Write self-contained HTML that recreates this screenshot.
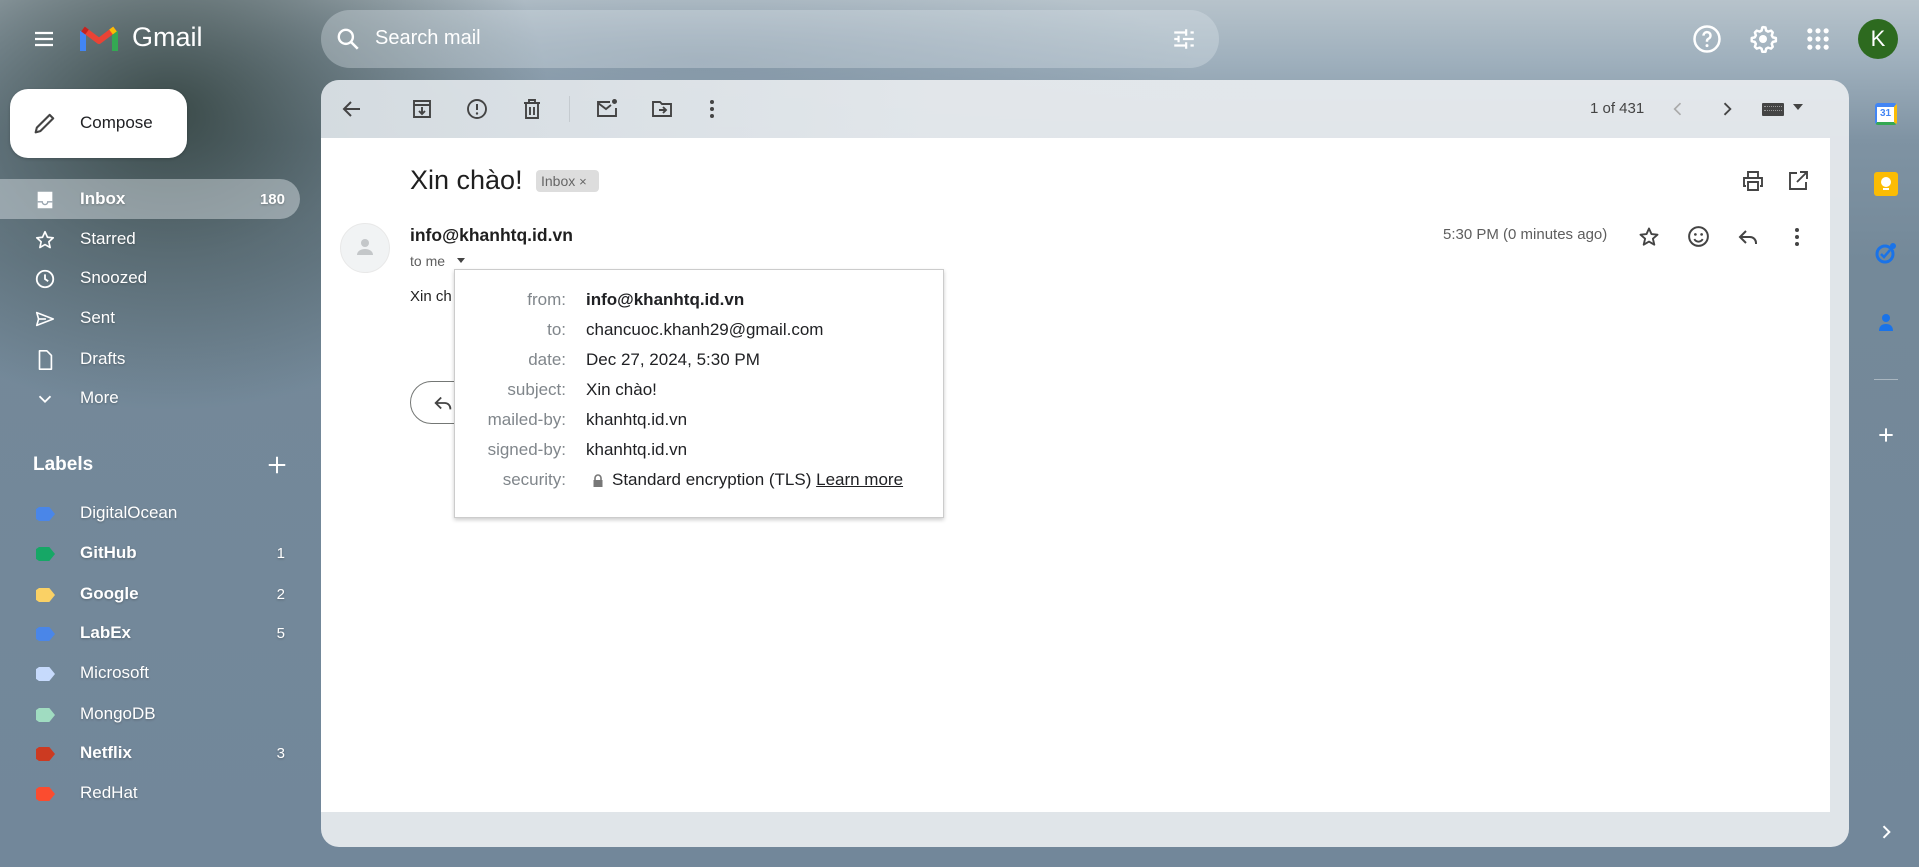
<!DOCTYPE html>
<html><head><meta charset="utf-8"><style>
*{box-sizing:border-box;margin:0;padding:0}
body{width:1919px;height:867px;overflow:hidden;font-family:"Liberation Sans",Arial,sans-serif;position:relative;
background:#72879a;}
.bg{position:absolute;inset:0;
background:
radial-gradient(ellipse 380px 300px at 170px 110px,rgba(45,60,56,.85) 0%,rgba(70,86,88,.55) 50%,rgba(110,130,145,0) 100%),
radial-gradient(ellipse 500px 90px at 700px 60px,rgba(110,130,148,.5) 0%,rgba(110,130,148,0) 100%),
linear-gradient(180deg,#b7c3cb 0px,#9fb0bd 60px,#7f93a3 140px,#748999 260px,#72879a 867px);}
.abs{position:absolute}
svg{display:block}
.nav{position:absolute;left:0;width:300px;height:40px;display:flex;align-items:center;color:#fff;font-size:17px;text-shadow:0 1px 2px rgba(0,0,0,.25)}
.nav .ic{position:absolute;left:34px;top:10px}
.nav .t{position:absolute;left:80px}
.nav .c{position:absolute;right:15px;font-size:15px}
.tag{position:absolute;left:36px;top:14px;width:19px;height:14px;clip-path:polygon(0 15%,3px 0,70% 0,100% 50%,70% 100%,3px 100%,0 85%)}
.lbl{position:absolute;color:#80868b;font-size:17px;text-align:right;width:140px;left:426px}
.val{position:absolute;left:586px;font-size:17px;color:#202124}
</style></head><body>
<div class="bg"></div>

<svg class="abs" style="left:32px;top:27px" width="24" height="24" viewBox="0 0 24 24"><path d="M3 6h18M3 12h18M3 18h18" stroke="#fff" stroke-width="2.2"/></svg>
<svg class="abs" style="left:80px;top:24px" width="38" height="29" viewBox="0 0 38 29"><path d="M3 27V7" stroke="#4285f4" stroke-width="6"/><path d="M35 27V7" stroke="#34a853" stroke-width="6"/><path d="M3 5l16 12 16-12" stroke="#ea4335" stroke-width="6" fill="none" stroke-linejoin="round"/><path d="M35 5l-4 3" stroke="#fbbc04" stroke-width="6"/><path d="M3 5l4 3" stroke="#c5221f" stroke-width="6"/></svg>
<div class="abs" style="left:132px;top:22px;font-size:27px;color:#fff">Gmail</div>

<div class="abs" style="left:321px;top:10px;width:898px;height:58px;border-radius:29px;background:rgba(220,228,234,.35)"></div>
<svg class="abs" style="left:335px;top:26px" width="26" height="26" viewBox="0 0 24 24"><circle cx="10" cy="10" r="6.5" stroke="#fff" stroke-width="2.2" fill="none"/><path d="M15 15l6 6" stroke="#fff" stroke-width="2.4"/></svg>
<div class="abs" style="left:375px;top:27px;font-size:20px;color:#fff">Search mail</div>
<svg class="abs" style="left:1171px;top:26px" width="26" height="26" viewBox="0 0 24 24"><path d="M3 6h11M18 6h3M3 12h4M11 12h10M3 18h11M18 18h3M14 3v6M7 9v6M14 15v6" stroke="#fff" stroke-width="2" fill="none"/></svg>

<svg class="abs" style="left:1692px;top:24px" width="30" height="30" viewBox="0 0 24 24"><circle cx="12" cy="12" r="10" stroke="#fff" stroke-width="2" fill="none"/><path d="M9.2 9.3a2.8 2.8 0 1 1 3.8 2.6c-.8.4-1 1-1 1.8v.5" stroke="#fff" stroke-width="2" fill="none"/><circle cx="12" cy="17.3" r="1.2" fill="#fff"/></svg>
<svg class="abs" style="left:1748px;top:24px" width="30" height="30" viewBox="0 0 24 24"><path d="M12 2.5l2 .3.5 2.4 1.6.9 2.3-.8 1.4 1.5-.8 2.3.9 1.6 2.4.5v2.6l-2.4.5-.9 1.6.8 2.3-1.4 1.5-2.3-.8-1.6.9-.5 2.4h-2.6l-.5-2.4-1.6-.9-2.300.8-1.5-1.5.8-2.3-.9-1.6-2.4-.5v-2.6l2.4-.5.9-1.6-.8-2.3 1.5-1.5 2.3.8 1.6-.9.5-2.4z" stroke="#fff" stroke-width="2" fill="none" stroke-linejoin="round"/><circle cx="12" cy="12" r="3.2" fill="#fff"/></svg>
<svg class="abs" style="left:1804px;top:25px" width="28" height="28" viewBox="0 0 24 24" fill="#fff"><circle cx="5" cy="5" r="2.2"/><circle cx="12" cy="5" r="2.2"/><circle cx="19" cy="5" r="2.2"/><circle cx="5" cy="12" r="2.2"/><circle cx="12" cy="12" r="2.2"/><circle cx="19" cy="12" r="2.2"/><circle cx="5" cy="19" r="2.2"/><circle cx="12" cy="19" r="2.2"/><circle cx="19" cy="19" r="2.2"/></svg>
<div class="abs" style="left:1858px;top:19px;width:40px;height:40px;border-radius:50%;background:#2d6a1f;color:#fff;font-size:22px;text-align:center;line-height:40px">K</div>

<div class="abs" style="left:10px;top:89px;width:177px;height:69px;border-radius:18px;background:#fff;box-shadow:0 1px 3px rgba(0,0,0,.2)"></div>
<svg class="abs" style="left:31px;top:109px" width="28" height="28" viewBox="0 0 24 24"><path d="M4 20l1-4L16 5l3 3L8 19z" stroke="#444" stroke-width="1.8" fill="none" stroke-linejoin="round"/></svg>
<div class="abs" style="left:80px;top:113px;font-size:17px;color:#202124">Compose</div>

<div class="abs" style="left:0;top:179px;width:300px;height:40px;border-radius:0 20px 20px 0;background:rgba(225,230,235,.45)"></div>
<div class="nav" style="top:179px;font-weight:bold"><svg class="ic" width="22" height="22" viewBox="0 0 24 24"><path d="M4 3h16v18H4z" fill="#fff"/><path d="M4 14h5a3 3 0 0 0 6 0h5" stroke="#9aa6b0" stroke-width="1.5" fill="none"/></svg><span class="t">Inbox</span><span class="c">180</span></div>
<div class="nav" style="top:219px"><svg class="ic" width="22" height="22" viewBox="0 0 24 24"><path d="M12 3l2.7 6 6.3.6-4.8 4.3 1.4 6.3L12 17l-5.6 3.2 1.4-6.3L3 9.6 9.3 9z" stroke="#fff" stroke-width="1.8" fill="none" stroke-linejoin="round"/></svg><span class="t">Starred</span></div>
<div class="nav" style="top:258px"><svg class="ic" width="22" height="22" viewBox="0 0 24 24"><circle cx="12" cy="12" r="9" stroke="#fff" stroke-width="2" fill="none"/><path d="M12 7v5l3.5 2.5" stroke="#fff" stroke-width="2" fill="none"/></svg><span class="t">Snoozed</span></div>
<div class="nav" style="top:298px"><svg class="ic" width="22" height="22" viewBox="0 0 24 24"><path d="M3 5l18 7-18 7 2-7z" stroke="#fff" stroke-width="1.8" fill="none" stroke-linejoin="round"/><path d="M5 12h8" stroke="#fff" stroke-width="1.8"/></svg><span class="t">Sent</span></div>
<div class="nav" style="top:339px"><svg class="ic" width="22" height="22" viewBox="0 0 24 24"><path d="M6 2h8l5 5v15H6z" stroke="#fff" stroke-width="1.8" fill="none" stroke-linejoin="round"/></svg><span class="t">Drafts</span></div>
<div class="nav" style="top:378px"><svg class="ic" width="22" height="22" viewBox="0 0 24 24"><path d="M6 9l6 6 6-6" stroke="#fff" stroke-width="2" fill="none"/></svg><span class="t">More</span></div>

<div class="abs" style="left:33px;top:454px;font-size:19px;color:#fff;font-weight:bold">Labels</div>
<svg class="abs" style="left:266px;top:454px" width="22" height="22" viewBox="0 0 24 24"><path d="M12 3v18M3 12h18" stroke="#fff" stroke-width="2.2"/></svg>

<div class="nav" style="top:493px"><div class="tag" style="background:#4a86e8"></div><span class="t">DigitalOcean</span></div>
<div class="nav" style="top:533px;font-weight:bold"><div class="tag" style="background:#16a766"></div><span class="t">GitHub</span><span class="c" style="font-weight:normal">1</span></div>
<div class="nav" style="top:574px;font-weight:bold"><div class="tag" style="background:#fad165"></div><span class="t">Google</span><span class="c" style="font-weight:normal">2</span></div>
<div class="nav" style="top:613px;font-weight:bold"><div class="tag" style="background:#4a86e8"></div><span class="t">LabEx</span><span class="c" style="font-weight:normal">5</span></div>
<div class="nav" style="top:653px"><div class="tag" style="background:#c6dafc"></div><span class="t">Microsoft</span></div>
<div class="nav" style="top:694px"><div class="tag" style="background:#a0dcc1"></div><span class="t">MongoDB</span></div>
<div class="nav" style="top:733px;font-weight:bold"><div class="tag" style="background:#cc3a21"></div><span class="t">Netflix</span><span class="c" style="font-weight:normal">3</span></div>
<div class="nav" style="top:773px"><div class="tag" style="background:#fb4c2f"></div><span class="t">RedHat</span></div>

<div class="abs" style="left:321px;top:80px;width:1528px;height:767px;border-radius:18px;background:rgba(232,236,239,.93)"></div>
<div class="abs" style="left:321px;top:80px;width:1528px;height:58px;border-radius:18px 18px 0 0;background:linear-gradient(90deg,rgba(205,214,220,.6),rgba(225,230,234,.4) 40%,rgba(232,236,239,0))"></div>
<div class="abs" style="left:321px;top:138px;width:1509px;height:674px;background:#fff"></div>

<svg class="abs" style="left:340px;top:97px" width="24" height="24" viewBox="0 0 24 24"><path d="M20 12H5M11 5l-7 7 7 7" stroke="#444" stroke-width="2" fill="none"/></svg>
<svg class="abs" style="left:410px;top:97px" width="24" height="24" viewBox="0 0 24 24"><path d="M4 4h16v16H4zM4 8h16M12 10v7M9 14l3 3 3-3" stroke="#444" stroke-width="1.9" fill="none"/></svg>
<svg class="abs" style="left:465px;top:97px" width="24" height="24" viewBox="0 0 24 24"><circle cx="12" cy="12" r="9" stroke="#444" stroke-width="1.9" fill="none"/><path d="M12 7v6" stroke="#444" stroke-width="2"/><circle cx="12" cy="16.5" r="1.2" fill="#444"/></svg>
<svg class="abs" style="left:520px;top:97px" width="24" height="24" viewBox="0 0 24 24"><path d="M4 6h16M9 6V3h6v3M6 6v15h12V6M10 10v8M14 10v8" stroke="#444" stroke-width="1.9" fill="none"/></svg>
<div class="abs" style="left:569px;top:96px;width:1px;height:26px;background:#c5cbd0"></div>
<svg class="abs" style="left:595px;top:97px" width="24" height="24" viewBox="0 0 24 24"><path d="M15 5H3v14h18v-8M3 6l8 6 5-4" stroke="#444" stroke-width="1.9" fill="none"/><circle cx="19.5" cy="4.5" r="2.5" fill="#444"/></svg>
<svg class="abs" style="left:650px;top:97px" width="24" height="24" viewBox="0 0 24 24"><path d="M3 5h7l2 2h9v12H3zM9 13h7M13 10l3 3-3 3" stroke="#444" stroke-width="1.9" fill="none"/></svg>
<svg class="abs" style="left:700px;top:97px" width="24" height="24" viewBox="0 0 24 24" fill="#444"><circle cx="12" cy="5" r="2"/><circle cx="12" cy="12" r="2"/><circle cx="12" cy="19" r="2"/></svg>
<div class="abs" style="left:1590px;top:100px;font-size:15px;color:#444">1 of 431</div>
<svg class="abs" style="left:1668px;top:99px" width="20" height="20" viewBox="0 0 24 24"><path d="M15 5l-7 7 7 7" stroke="#aaa" stroke-width="2" fill="none"/></svg>
<svg class="abs" style="left:1717px;top:99px" width="20" height="20" viewBox="0 0 24 24"><path d="M9 5l7 7-7 7" stroke="#444" stroke-width="2.2" fill="none"/></svg>
<div class="abs" style="left:1762px;top:103px;width:22px;height:13px;background:#444;border-radius:1px"></div>
<div class="abs" style="left:1764px;top:106px;width:18px;height:5px;border-top:1px dotted #999;border-bottom:1px dotted #999"></div>
<svg class="abs" style="left:1792px;top:103px" width="12" height="8" viewBox="0 0 12 8"><path d="M1 1h10L6 7z" fill="#444"/></svg>

<div class="abs" style="left:410px;top:165px;font-size:27px;color:#1f1f1f">Xin chào!</div>
<div class="abs" style="left:536px;top:170px;width:63px;height:22px;background:#ddd;border-radius:4px;font-size:14px;color:#666;line-height:22px;padding-left:5px">Inbox <span style="font-size:13px">×</span></div>
<svg class="abs" style="left:1741px;top:169px" width="24" height="24" viewBox="0 0 24 24"><path d="M7 8V3h10v5M5 17H3V9h18v8h-2M7 13h10v8H7z" stroke="#444" stroke-width="1.9" fill="none"/></svg>
<svg class="abs" style="left:1786px;top:169px" width="24" height="24" viewBox="0 0 24 24"><path d="M11 4H4v16h16v-7M14 3h7v7M21 3l-10 10" stroke="#444" stroke-width="1.9" fill="none"/></svg>

<div class="abs" style="left:340px;top:223px;width:50px;height:50px;border-radius:50%;background:#f1f3f4;border:1px solid #e8e8e8"></div>
<svg class="abs" style="left:353px;top:235px" width="24" height="24" viewBox="0 0 24 24" fill="#c4c7c9"><circle cx="12" cy="8" r="4"/><path d="M4 20c0-4 4-6 8-6s8 2 8 6z"/></svg>
<div class="abs" style="left:410px;top:225px;font-size:17.5px;font-weight:bold;color:#1f1f1f">info@khanhtq.id.vn</div>
<div class="abs" style="left:410px;top:253px;font-size:14px;color:#5e5e5e">to me</div>
<svg class="abs" style="left:455px;top:257px" width="12" height="8" viewBox="0 0 12 8"><path d="M2 1h8L6 6z" fill="#444"/></svg>
<div class="abs" style="left:410px;top:288px;font-size:15px;color:#222">Xin ch</div>
<div class="abs" style="left:410px;top:381px;width:150px;height:43px;border:1px solid #747775;border-radius:22px"></div>
<svg class="abs" style="left:432px;top:392px" width="22" height="22" viewBox="0 0 24 24"><path d="M10 6l-6 6 6 6M4 12h10a6 6 0 0 1 6 6v1" stroke="#444" stroke-width="2" fill="none"/></svg>

<div class="abs" style="left:1443px;top:226px;font-size:15px;color:#5e5e5e">5:30 PM (0 minutes ago)</div>
<svg class="abs" style="left:1637px;top:225px" width="24" height="24" viewBox="0 0 24 24"><path d="M12 3.5l2.5 5.6 6 .6-4.6 4 1.4 6L12 16.6 6.7 19.7l1.4-6-4.6-4 6-.6z" stroke="#444" stroke-width="1.9" fill="none" stroke-linejoin="round"/></svg>
<svg class="abs" style="left:1686px;top:224px" width="25" height="25" viewBox="0 0 24 24"><circle cx="12" cy="12" r="9" stroke="#444" stroke-width="1.9" fill="none"/><circle cx="9" cy="10" r="1.3" fill="#444"/><circle cx="15" cy="10" r="1.3" fill="#444"/><path d="M8 14.5a4.5 4.5 0 0 0 8 0" stroke="#444" stroke-width="1.8" fill="none"/></svg>
<svg class="abs" style="left:1736px;top:225px" width="24" height="24" viewBox="0 0 24 24"><path d="M10 6l-6 6 6 6M4 12h10a6 6 0 0 1 6 6v1" stroke="#444" stroke-width="2" fill="none"/></svg>
<svg class="abs" style="left:1785px;top:225px" width="24" height="24" viewBox="0 0 24 24" fill="#444"><circle cx="12" cy="5" r="2"/><circle cx="12" cy="12" r="2"/><circle cx="12" cy="19" r="2"/></svg>

<div class="abs" style="left:454px;top:269px;width:490px;height:249px;background:#fff;border:1px solid #ccc;box-shadow:0 2px 4px rgba(0,0,0,.2)"></div>
<div class="lbl" style="top:290px">from:</div><div class="val" style="top:290px;font-weight:bold">info@khanhtq.id.vn</div>
<div class="lbl" style="top:320px">to:</div><div class="val" style="top:320px">chancuoc.khanh29@gmail.com</div>
<div class="lbl" style="top:350px">date:</div><div class="val" style="top:350px">Dec 27, 2024, 5:30 PM</div>
<div class="lbl" style="top:380px">subject:</div><div class="val" style="top:380px">Xin chào!</div>
<div class="lbl" style="top:410px">mailed-by:</div><div class="val" style="top:410px">khanhtq.id.vn</div>
<div class="lbl" style="top:440px">signed-by:</div><div class="val" style="top:440px">khanhtq.id.vn</div>
<div class="lbl" style="top:470px">security:</div>
<svg class="abs" style="left:591px;top:473px" width="14" height="16" viewBox="0 0 14 16"><path d="M4 7V5a3 3 0 0 1 6 0v2" stroke="#777" stroke-width="1.6" fill="none"/><rect x="2.5" y="7" width="9" height="7" fill="#777"/></svg>
<div class="val" style="top:470px;left:612px">Standard encryption (TLS) <span style="text-decoration:underline">Learn more</span></div>

<div class="abs" style="left:1875px;top:103px;width:22px;height:22px;background:#fff;border-radius:3px;border-top:4px solid #4285f4;border-left:2px solid #4285f4;border-bottom:3px solid #34a853;border-right:3px solid #fbbc04;font-size:10px;color:#4285f4;text-align:center;line-height:14px;font-weight:bold">31</div>
<div class="abs" style="left:1874px;top:172px;width:24px;height:24px;background:#fbbc04;border-radius:3px"></div>
<div class="abs" style="left:1881px;top:177px;width:10px;height:10px;background:#fff;border-radius:50%"></div>
<div class="abs" style="left:1883px;top:188px;width:6px;height:2px;background:#fff"></div>
<svg class="abs" style="left:1874px;top:241px" width="24" height="24" viewBox="0 0 24 24"><circle cx="11" cy="13" r="8" stroke="#1a73e8" stroke-width="3" fill="none"/><path d="M7 13l3 3 6-7" stroke="#1a73e8" stroke-width="2.5" fill="none"/><circle cx="19" cy="5" r="3" fill="#1a73e8"/></svg>
<svg class="abs" style="left:1876px;top:311px" width="20" height="24" viewBox="0 0 20 24" fill="#1a73e8"><circle cx="10" cy="7" r="4"/><path d="M3 20c0-5 3-7 7-7s7 2 7 7z"/></svg>
<div class="abs" style="left:1874px;top:379px;width:24px;height:1px;background:#a9b6c0"></div>
<svg class="abs" style="left:1876px;top:425px" width="20" height="20" viewBox="0 0 24 24"><path d="M12 4v16M4 12h16" stroke="#fff" stroke-width="2.4"/></svg>
<svg class="abs" style="left:1876px;top:822px" width="20" height="20" viewBox="0 0 24 24"><path d="M9 5l7 7-7 7" stroke="#fff" stroke-width="2.4" fill="none"/></svg>
</body></html>
